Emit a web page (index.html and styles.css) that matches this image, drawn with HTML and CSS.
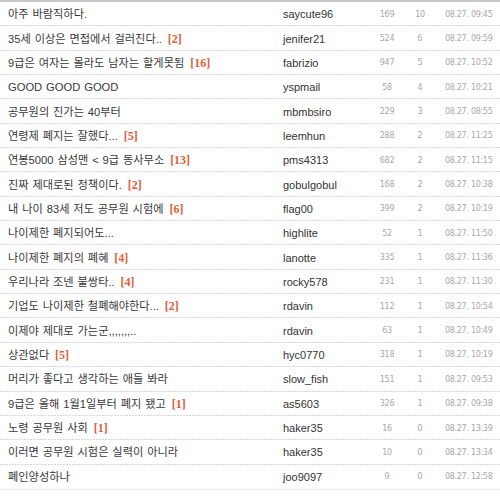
FILE: index.html
```html
<!DOCTYPE html>
<html lang="ko">
<head>
<meta charset="utf-8">
<title>게시판</title>
<link rel="stylesheet" href="styles.css">
</head>
<body>
<div class="board">
  <div class="row"><div class="title">아주 바람직하다.</div><div class="author">saycute96</div><div class="views">169</div><div class="cnt">10</div><div class="date">08.27. 09:45</div></div>
  <div class="row"><div class="title">35세 이상은 면접에서 걸러진다.. <span class="cmt">[2]</span></div><div class="author">jenifer21</div><div class="views">524</div><div class="cnt">6</div><div class="date">08.27. 09:59</div></div>
  <div class="row"><div class="title">9급은 여자는 몰라도 남자는 할게못됨 <span class="cmt">[16]</span></div><div class="author">fabrizio</div><div class="views">947</div><div class="cnt">5</div><div class="date">08.27. 10:52</div></div>
  <div class="row"><div class="title">GOOD GOOD GOOD</div><div class="author">yspmail</div><div class="views">58</div><div class="cnt">4</div><div class="date">08.27. 10:21</div></div>
  <div class="row"><div class="title">공무원의 진가는 40부터</div><div class="author">mbmbsiro</div><div class="views">229</div><div class="cnt">3</div><div class="date">08.27. 08:55</div></div>
  <div class="row"><div class="title">연령제 폐지는 잘했다... <span class="cmt">[5]</span></div><div class="author">leemhun</div><div class="views">288</div><div class="cnt">2</div><div class="date">08.27. 11:25</div></div>
  <div class="row"><div class="title">연봉5000 삼성맨 &lt; 9급 동사무소 <span class="cmt">[13]</span></div><div class="author">pms4313</div><div class="views">682</div><div class="cnt">2</div><div class="date">08.27. 11:15</div></div>
  <div class="row"><div class="title">진짜 제대로된 정책이다. <span class="cmt">[2]</span></div><div class="author">gobulgobul</div><div class="views">168</div><div class="cnt">2</div><div class="date">08.27. 10:38</div></div>
  <div class="row"><div class="title">내 나이 83세 저도 공무원 시험에 <span class="cmt">[6]</span></div><div class="author">flag00</div><div class="views">399</div><div class="cnt">2</div><div class="date">08.27. 10:19</div></div>
  <div class="row"><div class="title">나이제한 폐지되어도...</div><div class="author">highlite</div><div class="views">52</div><div class="cnt">1</div><div class="date">08.27. 11:50</div></div>
  <div class="row"><div class="title">나이제한 폐지의 폐혜 <span class="cmt">[4]</span></div><div class="author">lanotte</div><div class="views">335</div><div class="cnt">1</div><div class="date">08.27. 11:36</div></div>
  <div class="row"><div class="title">우리나라 조넨 불쌍타.. <span class="cmt">[4]</span></div><div class="author">rocky578</div><div class="views">231</div><div class="cnt">1</div><div class="date">08.27. 11:30</div></div>
  <div class="row"><div class="title">기업도 나이제한 철폐해야한다... <span class="cmt">[2]</span></div><div class="author">rdavin</div><div class="views">112</div><div class="cnt">1</div><div class="date">08.27. 10:54</div></div>
  <div class="row"><div class="title">이제야 제대로 가는군,,,,,,,..</div><div class="author">rdavin</div><div class="views">63</div><div class="cnt">1</div><div class="date">08.27. 10:49</div></div>
  <div class="row"><div class="title">상관없다 <span class="cmt">[5]</span></div><div class="author">hyc0770</div><div class="views">318</div><div class="cnt">1</div><div class="date">08.27. 10:19</div></div>
  <div class="row"><div class="title">머리가 좋다고 생각하는 애들 봐라</div><div class="author">slow_fish</div><div class="views">151</div><div class="cnt">1</div><div class="date">08.27. 09:53</div></div>
  <div class="row"><div class="title">9급은 올해 1월1일부터 폐지 됐고 <span class="cmt">[1]</span></div><div class="author">as5603</div><div class="views">326</div><div class="cnt">1</div><div class="date">08.27. 09:38</div></div>
  <div class="row"><div class="title">노령 공무원 사회 <span class="cmt">[1]</span></div><div class="author">haker35</div><div class="views">16</div><div class="cnt">0</div><div class="date">08.27. 13:39</div></div>
  <div class="row"><div class="title">이러면 공무원 시험은 실력이 아니라</div><div class="author">haker35</div><div class="views">10</div><div class="cnt">0</div><div class="date">08.27. 13:34</div></div>
  <div class="row"><div class="title">폐인양성하나</div><div class="author">joo9097</div><div class="views">9</div><div class="cnt">0</div><div class="date">08.27. 12:58</div></div>
</div>
</body>
</html>
```
FILE: styles.css
```css
html, body {
  margin: 0;
  padding: 0;
  background: #fff;
}
.board {
  width: 500px;
  border-top: 2px solid #c8c8c8;
  border-bottom: 1px solid #eeeeee;
}
.row {
  display: grid;
  grid-template-columns: 275px 87px 34px 32px 72px;
  align-items: center;
  height: 24.35px;
  box-sizing: border-box;
  padding-left: 8px;
  background-image: linear-gradient(to right, #d6d6d6 2px, transparent 2px);
  background-size: 3px 1px;
  background-repeat: repeat-x;
  background-position: left bottom;
}
.row:last-child {
  background-image: none;
}
.title {
  font-family: "Liberation Sans", "Noto Sans CJK KR", sans-serif;
  font-size: 11.2px;
  word-spacing: 0.8px;
  color: #383838;
  white-space: nowrap;
  line-height: 14px;
}
.cmt {
  font-family: "Liberation Serif", serif;
  font-weight: bold;
  font-size: 12px;
  color: #e0603a;
  margin-left: 2px;
  word-spacing: 0;
}
.author {
  font-family: "Liberation Sans", sans-serif;
  font-size: 11px;
  color: #333;
}
.views, .cnt, .date {
  font-family: "DejaVu Sans", sans-serif;
  font-size: 8px;
  letter-spacing: -0.3px;
  color: #a8a8a8;
}
.views, .cnt {
  text-align: center;
}
.date {
  padding-left: 9px;
}
```
